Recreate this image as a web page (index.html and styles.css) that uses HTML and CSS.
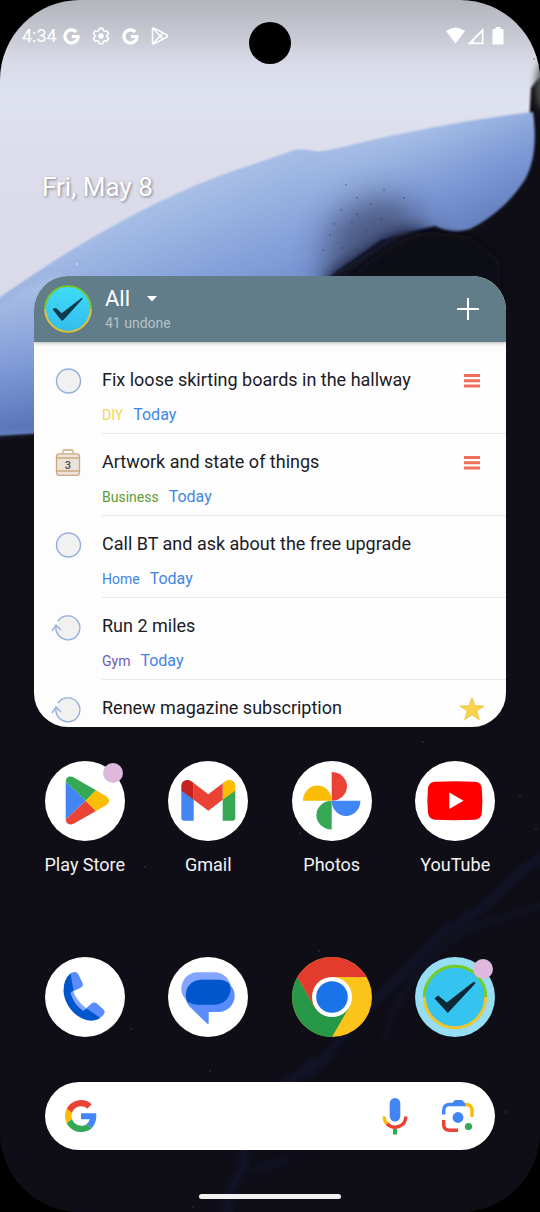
FILE: index.html
```html
<!DOCTYPE html>
<html lang="en">
<head>
<meta charset="utf-8">
<meta name="viewport" content="width=device-width, initial-scale=1">
<title>Home screen</title>
<link rel="stylesheet" href="styles.css">
</head>
<body>
<svg class="symbols" aria-hidden="true">
  <defs>
    <linearGradient id="tick-fill" x1="0" y1="0" x2="0" y2="1"><stop offset="0" stop-color="#3fdcf8"/><stop offset="1" stop-color="#33bdec"/></linearGradient>
    <symbol id="g-mono" viewBox="0 0 48 48"><path fill="none" stroke="#fff" stroke-width="9" d="M37.500 11A18.500 18.500 0 1 0 42.500 24H25"/></symbol>
    <symbol id="repeat" viewBox="0 0 36 36"><path class="ring" d="M8 12A12 12 0 1 1 6 17"/><path class="ring-line" d="M2 22L6 16L11 21"/></symbol>
    <symbol id="circle" viewBox="0 0 36 36"><circle class="ring" cx="18.500" cy="18" r="12"/></symbol>
    <symbol id="bars" viewBox="0 0 24 24"><path fill="#ef6f5c" d="M4 5h16v3H4zM4 10.300h16v3H4zM4 15.600h16v3H4z"/></symbol>
  </defs>
</svg>
<div class="phone">
  <svg class="wallpaper" viewBox="0 0 540 1212" preserveAspectRatio="xMidYMin slice" aria-hidden="true">
    <defs>
      <linearGradient id="sky" x1="0" y1="0" x2="0" y2="300" gradientUnits="userSpaceOnUse"><stop offset="0" stop-color="#b3b5bd"/><stop offset=".12" stop-color="#c7c9d3"/><stop offset=".2" stop-color="#d7dae6"/><stop offset=".32" stop-color="#dfe2ef"/><stop offset=".6" stop-color="#dcdcea"/><stop offset="1" stop-color="#dadbe9"/></linearGradient>
      <linearGradient id="blue" x1="190" y1="175" x2="265" y2="365" gradientUnits="userSpaceOnUse"><stop offset="0" stop-color="#adc3e8"/><stop offset=".45" stop-color="#88a3db"/><stop offset="1" stop-color="#5f7cc2"/></linearGradient>
      <linearGradient id="lobe" x1="430" y1="120" x2="480" y2="235" gradientUnits="userSpaceOnUse"><stop offset="0" stop-color="#a9c0e7"/><stop offset=".55" stop-color="#7c98d5"/><stop offset="1" stop-color="#607bbb"/></linearGradient>
      <linearGradient id="left" x1="0" y1="290" x2="30" y2="435" gradientUnits="userSpaceOnUse"><stop offset="0" stop-color="#aabfe6"/><stop offset=".5" stop-color="#829cd8"/><stop offset="1" stop-color="#566fb4"/></linearGradient>
      <linearGradient id="fade" x1="300" y1="0" x2="425" y2="0" gradientUnits="userSpaceOnUse"><stop offset="0" stop-color="#fff"/><stop offset="1" stop-color="#000"/></linearGradient>
      <mask id="left-mask" maskUnits="userSpaceOnUse" x="0" y="0" width="540" height="500"><rect width="540" height="500" fill="url(#fade)"/></mask>
      <filter id="soft1" filterUnits="userSpaceOnUse" x="-60" y="-60" width="660" height="1340"><feGaussianBlur stdDeviation="1"/></filter>
      <filter id="soft3" filterUnits="userSpaceOnUse" x="-60" y="-60" width="660" height="1340"><feGaussianBlur stdDeviation="3"/></filter>
      <filter id="soft8" filterUnits="userSpaceOnUse" x="-60" y="-60" width="660" height="1340"><feGaussianBlur stdDeviation="8"/></filter>
      <filter id="soft16" filterUnits="userSpaceOnUse" x="-60" y="-60" width="660" height="1340"><feGaussianBlur stdDeviation="16"/></filter>
    </defs>
    <rect width="540" height="1212" fill="#0f0e17"/>
    <path fill="url(#sky)" filter="url(#soft1)" d="M-20 -20H560V64Q540 74 531 88L529 125L300 180L-20 330Z"/>
    <path fill="url(#lobe)" filter="url(#soft1)" d="M-20 312Q50 262 100 234Q180 188 250 166Q285 154 296 150Q308 150 318 152Q330 151 345 147Q440 123 533 112C536 135 536 158 526 178C510 204 488 220 470 229Q452 235 435 226L380 240L310 290L50 432L-20 436Z"/>
    <g mask="url(#left-mask)"><path fill="url(#blue)" filter="url(#soft1)" d="M-20 312Q50 262 100 234Q180 188 250 166Q285 154 296 150Q308 150 318 152Q330 151 345 147Q400 133 430 127V226L380 240L310 290L50 432L-20 436Z"/></g>
    <path fill="url(#left)" filter="url(#soft3)" d="M-20 320L0 305Q24 285 60 275V431Q30 430 -20 436Z"/>
    <path fill="#2a3350" filter="url(#soft16)" opacity=".6" d="M322 320L330 225Q365 190 400 200Q415 210 425 235V320Z"/>
    <path fill="#11101a" filter="url(#soft8)" d="M322 330L330 276Q365 256 388 240Q408 228 428 234L450 250V330Z"/>
    <path fill="#0f0e17" filter="url(#soft3)" d="M345 320L352 276Q390 240 425 232Q445 232 470 236L500 260V320Z"/>
    <ellipse cx="543" cy="86" rx="8" ry="24" fill="#55564f" filter="url(#soft3)" opacity=".8"/>
    <g fill="#26324f" opacity=".4"><circle cx="346" cy="185" r="1"/><circle cx="357" cy="198" r="1"/><circle cx="341" cy="210" r="1"/><circle cx="371" cy="204" r="1"/><circle cx="384" cy="190" r="1"/><circle cx="404" cy="198" r="1"/><circle cx="352" cy="222" r="1"/><circle cx="334" cy="224" r="1"/><circle cx="366" cy="230" r="1"/><circle cx="381" cy="219" r="1"/><circle cx="323" cy="250" r="1"/><circle cx="343" cy="248" r="1"/><circle cx="330" cy="235" r="1"/><circle cx="357" cy="214" r="1"/><circle cx="534" cy="59" r="1"/></g>
    <g fill="none" stroke="#151b40" filter="url(#soft3)" opacity=".5"><path stroke-width="7" d="M550 850Q520 872 495 896T445 930Q420 960 395 982T340 1040T305 1075"/><path stroke-width="3" d="M545 905Q510 915 480 925T415 978Q390 1010 385 1040"/><path stroke-width="8" d="M315 1060Q300 1075 250 1110L242 1140L245 1165Q225 1190 228 1215"/><path stroke-width="4" d="M290 1158L250 1172"/></g>
    <g fill="#5b5f74" opacity=".35"><circle cx="423" cy="742" r="1"/><circle cx="520" cy="796" r="1"/><circle cx="536" cy="829" r="1"/><circle cx="131" cy="1029" r="1"/><circle cx="145" cy="867" r="1"/><circle cx="300" cy="833" r="1"/><circle cx="319" cy="951" r="1"/><circle cx="210" cy="1071" r="1"/><circle cx="506" cy="1112" r="1"/><circle cx="193" cy="1207" r="1"/></g>
    <circle cx="77" cy="264" r="1" fill="#cfdcf5"/>
  </svg>

  <header class="status">
    <div class="status-group">
      <time class="clock">4:34</time>
      <svg width="17" height="17"><use href="#g-mono"/></svg>
      <svg width="18" height="18" viewBox="0 0 18 18" fill="none" stroke="#fff" stroke-width="1.600" stroke-linejoin="round"><path d="M7.300 1.400h3.400l.6 2.200 1.400.8 2.200-.6 1.700 2.900-1.600 1.600v1.500l1.600 1.600-1.700 2.900-2.200-.6-1.400.8-.6 2.200H7.300l-.6-2.200-1.400-.8-2.200.6-1.700-2.900L3 9.800V8.300L1.400 6.700l1.700-2.900 2.200.6 1.400-.8z"/><circle cx="9" cy="9" r="2" fill="#fff"/></svg>
      <svg width="17" height="17"><use href="#g-mono"/></svg>
      <svg width="18" height="18" viewBox="0 0 18 18" fill="none" stroke="#fff" stroke-width="1.500" stroke-linejoin="round"><path d="M1.500 1.500Q1.500.5 3 1.200L16 8Q17.300 9 16 10L3 16.800Q1.500 17.400 1.500 16.500ZM2 1.500L12 12M2 16.500L12 6"/></svg>
    </div>
    <span class="camera"></span>
    <svg class="signals" width="58" height="18" viewBox="0 0 58 18" fill="#fff"><path d="M0 4Q9.500-3 19 4L9.500 16.500Z"/><path d="M21.500 17.200L37.500 1V17.200ZM28 15.500H35.800V5.500L28 13.200Z" fill-rule="evenodd"/><rect x="46.500" y="2" width="11" height="15.500" rx="1"/><rect x="49.500" y="0" width="5" height="3"/></svg>
  </header>

  <main class="home">
    <p class="date">Fri, May 8</p>

    <section class="widget" aria-label="Tasks">
      <div class="widget-head">
        <svg class="widget-logo" viewBox="8 8 64 64"><circle cx="40" cy="40" r="30.500" fill="url(#tick-fill)"/><path d="M9.500 40a30.500 30.500 0 0 1 61 0" fill="none" stroke="#76c927" stroke-width="2.600"/><path d="M9.500 40a30.500 30.500 0 0 0 61 0" fill="none" stroke="#e6c22e" stroke-width="2.600"/><path fill="#0d3a4c" d="M20 41Q20 38.500 24 38.500L31.500 45.500L58 25.200Q60 24.500 59 27L34 54.500L31.500 55.500Z"/></svg>
        <div class="list-name">
          <label class="picker"><select aria-label="List"><option>All</option></select><svg width="10" height="6" viewBox="0 0 10 6"><path fill="#fff" d="M0 0h10L5 5.500z"/></svg></label>
          <p class="count">41 undone</p>
        </div>
        <button class="add" type="button" aria-label="Add task"><svg width="22" height="22" viewBox="0 0 22 22"><path stroke="#fff" stroke-width="2" d="M11 0v22M0 11h22"/></svg></button>
      </div>
      <ul class="tasks">
        <li class="task">
          <span class="check"><input type="checkbox" id="t1"><svg><use href="#circle"/></svg></span>
          <div class="task-body"><div class="task-text"><label class="title" for="t1">Fix loose skirting boards in the hallway</label><p class="meta"><span class="tag diy">DIY</span><span class="due">Today</span></p></div><svg class="mark"><use href="#bars"/></svg></div>
        </li>
        <li class="task">
          <span class="check"><input type="checkbox" id="t2"><svg viewBox="0 0 36 36"><g fill="#ece2d8" stroke="#cba983" stroke-width="1.300"><path fill="none" d="M13 9V6Q13 5 14 5H22Q23 5 23 6V9"/><rect x="6.500" y="8.800" width="23" height="21.500" rx="2.500"/><path d="M6.500 13h23M6.500 26h23"/></g><text class="case-count" x="18" y="23.500">3</text></svg></span>
          <div class="task-body"><div class="task-text"><label class="title" for="t2">Artwork and state of things</label><p class="meta"><span class="tag business">Business</span><span class="due">Today</span></p></div><svg class="mark"><use href="#bars"/></svg></div>
        </li>
        <li class="task">
          <span class="check"><input type="checkbox" id="t3"><svg><use href="#circle"/></svg></span>
          <div class="task-body"><div class="task-text"><label class="title" for="t3">Call BT and ask about the free upgrade</label><p class="meta"><span class="tag house">Home</span><span class="due">Today</span></p></div></div>
        </li>
        <li class="task">
          <span class="check"><input type="checkbox" id="t4"><svg><use href="#repeat"/></svg></span>
          <div class="task-body"><div class="task-text"><label class="title" for="t4">Run 2 miles</label><p class="meta"><span class="tag gym">Gym</span><span class="due">Today</span></p></div></div>
        </li>
        <li class="task">
          <span class="check"><input type="checkbox" id="t5"><svg><use href="#repeat"/></svg></span>
          <div class="task-body"><div class="task-text"><label class="title" for="t5">Renew magazine subscription</label></div><svg class="mark" viewBox="0 0 24 24"><path fill="#f9d44c" stroke="#eac03c" stroke-width=".8" d="M12 .5L14.900 8.700L23.800 9L16.700 14.200L19.400 22.800L12 17.700L4.600 22.800L7.300 14.200L.2 9L9.100 8.700Z"/></svg></div>
        </li>
      </ul>
    </section>

    <nav class="apps" aria-label="Apps">
      <a class="app" href="#play"><span class="icon has-badge"><svg viewBox="0 0 80 80"><circle cx="40" cy="40" r="40" fill="#fff"/><path fill="#4285f4" d="M20.700 20.500L40.700 39.700L20.700 58.500Z"/><path fill="#34a853" d="M20.700 20.500Q21.500 14 27.500 15.800L51 29.300L40.700 39.700Z"/><path fill="#ea4335" d="M20.700 58.500L40.700 39.700L51 50L29 62.500Q22 65.500 20.700 58.500Z"/><path fill="#fbbc04" d="M51 29.300L61.500 35.500Q66.500 39.700 61.500 44L51 50L40.700 39.700Z"/></svg></span>Play Store</a>
      <a class="app" href="#gmail"><span class="icon"><svg viewBox="0 0 80 80"><circle cx="40" cy="40" r="40" fill="#fff"/><path fill="#4285f4" d="M13.300 29L25.700 38V59.700H16.300Q13.300 59.700 13.300 56.700Z"/><path fill="#34a853" d="M67.300 29L54.700 38V59.700H64.300Q67.300 59.700 67.300 56.700Z"/><path fill="#c5221f" d="M13.300 25.500C13.300 19 20 17.500 24 20.800L25.700 22V38.700L13.300 29.500Z"/><path fill="#fbbc04" d="M67.300 25.500C67.300 19 60.700 17.500 56.500 20.800L54.700 22.200V38.700L67.300 29.500Z"/><path fill="#ea4335" d="M25.700 22L40.300 33.300L54.700 22.200V38.700L40.300 49.800L25.700 38.700Z"/></svg></span>Gmail</a>
      <a class="app" href="#photos"><span class="icon"><svg viewBox="0 0 80 80"><circle cx="40" cy="40" r="40" fill="#fff"/><path fill="#ea4335" d="M39.700 39.700V11A15.300 14.350 0 0 1 39.700 39.700"/><path fill="#4285f4" d="M39.700 39.700H68.400A14.350 15.300 0 0 1 39.700 39.700"/><path fill="#34a853" d="M39.700 39.700V68.400A15.300 14.350 0 0 1 39.700 39.700"/><path fill="#fbbc04" d="M39.700 39.700H11A14.350 15.300 0 0 1 39.700 39.700"/></svg></span>Photos</a>
      <a class="app" href="#youtube"><span class="icon"><svg viewBox="0 0 80 80"><circle cx="40" cy="40" r="40" fill="#fff"/><path fill="#f00" d="M20 20.700Q40 19.900 60 20.700Q66 21.200 66.800 27Q67.900 39.700 66.800 52Q66 58.200 60 58.700Q40 59.600 20 58.700Q14 58.200 13 52Q11.700 39.700 13 27Q14 21.200 20 20.700"/><path fill="#fff" d="M34.300 31.500L48.500 39.700L34.300 48Z"/></svg></span>YouTube</a>
    </nav>

    <nav class="apps dock" aria-label="Dock">
      <a class="app" href="#phone" aria-label="Phone"><span class="icon"><svg viewBox="0 0 80 80"><circle cx="40" cy="40" r="40" fill="#fff"/><path fill="#82a6ff" d="M25 34L28 33.500Q31.500 44 41 51L38 57L26 45Z"/><path fill="#5a8cff" d="M24.500 17Q31 13 33.500 17.500L37.800 26.500Q38.500 29 36 30.500L25.500 35.800L22 25ZM38 54L46.500 46.500Q49.500 44.500 52.500 47L58.500 52.500Q61.500 56 57 59.500L50 63L42 61Z"/><path fill="#0057cc" d="M25.500 16.500L28.500 33.500L25.500 35.800C28 44 32 50 38.500 54L41.500 51.500L55.500 61Q51 63.800 46 63.700C30 62.500 19 47 18.500 34Q18.500 22 25.500 16.500"/></svg></span></a>
      <a class="app" href="#messages" aria-label="Messages"><span class="icon"><svg viewBox="0 0 80 80"><circle cx="40" cy="40" r="40" fill="#fff"/><rect x="13.300" y="15.300" width="49.500" height="32.400" rx="16.200" fill="#82a6ff"/><path fill="#5a8cff" d="M33.500 22.700H50.500A16.150 16.150 0 0 1 50.500 55H40.700V66Q40.300 67.500 39 66.500L21.500 49.500Q17.700 45 17.700 38.500Q18.500 23.500 33.500 22.700"/><path fill="#0057cc" d="M33 22.700H50.500Q57 22.700 61.200 26.500Q63 31 62.500 33.500C61 43 54 47.700 46.500 47.700H29.500Q23.500 47.500 19 44.500Q17 39 18.200 34.500Q21 23.500 33 22.700"/></svg></span></a>
      <a class="app" href="#chrome" aria-label="Chrome"><span class="icon"><svg viewBox="0 0 80 80"><circle cx="40" cy="40" r="40" fill="#fcc31a"/><path fill="#279847" d="M5.400 20L22.700 50L40 40L57.300 50L40 80A40 40 0 0 1 5.400 20"/><path fill="#e33b2e" d="M5.400 20A40 40 0 0 1 74.600 20H40V40L22.700 50Z"/><circle cx="40" cy="40" r="20" fill="#fff"/><circle cx="40" cy="40" r="15.800" fill="#1a73e8"/></svg></span></a>
      <a class="app" href="#tasks" aria-label="Tasks"><span class="icon has-badge"><svg viewBox="0 0 80 80"><circle cx="40" cy="40" r="40" fill="#96def4"/><circle cx="40" cy="40" r="31" fill="#35c3f0"/><path d="M9.300 40a30.700 30.700 0 0 1 61.400 0" fill="none" stroke="#76cc27" stroke-width="3"/><path d="M9.300 40a30.700 30.700 0 0 0 61.400 0" fill="none" stroke="#f0c52f" stroke-width="3"/><path fill="#0c2836" d="M19.500 41.500L23 38.500L31.800 45.500L58.700 24.700L60.700 26L32.800 56Z"/></svg></span></a>
    </nav>

    <form class="search" role="search">
      <svg width="32" height="32" viewBox="0 0 48 48"><path fill="#ea4335" d="M24 9.500c3.540 0 6.710 1.220 9.210 3.600l6.850-6.850C35.900 2.380 30.470 0 24 0 14.620 0 6.510 5.380 2.560 13.220l7.980 6.190C12.430 13.720 17.740 9.500 24 9.500z"/><path fill="#4285f4" d="M46.980 24.550c0-1.570-.15-3.090-.38-4.550H24v9.020h12.940c-.58 2.960-2.260 5.480-4.780 7.180l7.730 6c4.510-4.180 7.090-10.360 7.090-17.650z"/><path fill="#fbbc05" d="M10.530 28.590A14.500 14.500 0 0 1 9.770 24c0-1.600.27-3.140.76-4.590l-7.980-6.190A23.900 23.900 0 0 0 0 24c0 3.870.92 7.530 2.560 10.780z"/><path fill="#34a853" d="M24 48c6.480 0 11.930-2.130 15.890-5.810l-7.730-6c-2.150 1.450-4.920 2.300-8.160 2.300-6.260 0-11.570-4.220-13.470-9.910l-7.980 6.190C6.510 42.620 14.620 48 24 48z"/></svg>
      <input type="text" aria-label="Search">
      <button type="button" aria-label="Voice search"><svg width="26" height="38" viewBox="0 0 26 38"><rect x="7.700" y="1" width="10.600" height="23.500" rx="5.300" fill="#4285f4"/><g fill="none" stroke-width="3.400"><path stroke="#fbbc04" d="M2.200 19.500Q2.200 24.500 5.800 27.500"/><path stroke="#ea4335" d="M5 26.700C12 33.500 23.800 29.500 23.800 19.500"/><path stroke="#34a853" stroke-width="4" d="M13 32V37.500"/></g></svg></button>
      <button type="button" aria-label="Lens"><svg width="34" height="38" viewBox="0 0 34 38"><g fill="none" stroke-width="3.400"><path stroke="#fbbc04" d="M23 7.500H25Q31 7.500 31 13.500V20"/><path stroke="#4285f4" d="M2.700 17.500V13.500Q2.700 7.500 8.700 7.500H24"/><path stroke="#ea4335" d="M2.700 23V27.500Q2.700 33.200 8.700 33.200H17"/></g><path fill="#4285f4" d="M10.500 7.500L13 4Q13.500 3 15 3H20Q21.500 3 22 4L25 8.500H10.500Z"/><circle cx="17" cy="20.500" r="5.400" fill="#4285f4"/><circle cx="27.500" cy="29.500" r="3.600" fill="#34a853"/></svg></button>
    </form>
  </main>
  <span class="handle"></span>
</div>
</body>
</html>
```
FILE: styles.css
```css
* { box-sizing: border-box; }
body { margin: 0; background: #000; font-family: Roboto, "Liberation Sans", sans-serif; }
p, ul { margin: 0; padding: 0; }
button { border: 0; padding: 0; background: none; cursor: pointer; }
svg { display: block; flex: none; }
.symbols { position: absolute; width: 0; height: 0; }

.phone {
  position: relative;
  display: flex;
  flex-direction: column;
  min-height: 100vh;
  overflow: hidden;
  border-radius: 80px;
  background: #0f0e17;
  color: #fff;
}
.wallpaper { position: absolute; inset: 0; width: 100%; height: 100%; }
.status, .home, .handle { position: relative; }

.status {
  display: flex;
  justify-content: space-between;
  align-items: center;
  height: 72px;
  padding: 0 36px 0 22px;
}
.status-group { display: flex; align-items: center; gap: 12px; }
.clock { margin-right: -6px; font-size: 18px; line-height: 24px; }
.camera {
  position: absolute;
  top: 22px;
  left: 50%;
  width: 42px;
  height: 42px;
  margin-left: -21px;
  border-radius: 50%;
  background: #000;
}

.home { display: flex; flex-direction: column; }
.date {
  margin: 99px 42px 73px;
  font-size: 26px;
  line-height: 32px;
  text-shadow: 1px 1px 3px rgba(0, 0, 0, .45);
}

.widget {
  margin: 0 34px;
  overflow: hidden;
  border-radius: 34px;
  background: #fdfdfd;
}
.widget-head {
  position: relative;
  display: flex;
  align-items: center;
  height: 66px;
  padding: 0 27px 0 10px;
  background: #617d8a;
  box-shadow: 0 1px 4px rgba(0, 0, 0, .3);
}
.widget-logo { width: 48px; height: 48px; }
.list-name { flex: 1; margin-left: 13px; }
.picker { display: flex; align-items: center; }
.picker select {
  width: 42px;
  border: 0;
  padding: 0;
  appearance: none;
  background: none;
  color: #fff;
  font: 22px/28px Roboto, "Liberation Sans", sans-serif;
}
.count { color: #b5c1c8; font-size: 14px; line-height: 20px; }

.tasks { max-height: 385px; padding-top: 10px; overflow: hidden; list-style: none; }
.task { display: flex; gap: 16px; min-height: 82px; padding-left: 16px; }
.check { display: grid; width: 36px; height: 36px; margin-top: 11px; }
.check > * { grid-area: 1 / 1; width: 36px; height: 36px; margin: 0; }
.check input { appearance: none; }
.check svg { pointer-events: none; }
.ring { fill: #f1f1f1; stroke: #93aedb; stroke-width: 1.4; }
.ring-line { fill: none; stroke: #93aedb; stroke-width: 1.4; }
.case-count { fill: #4d5058; font-size: 11px; font-weight: 500; text-anchor: middle; }
.task-body {
  display: flex;
  flex: 1;
  justify-content: space-between;
  padding: 16px 22px 0 0;
  border-bottom: 1px solid #e9e9eb;
}
.title { color: #1b1b26; font-size: 18px; line-height: 24px; }
.meta { display: flex; align-items: center; gap: 10px; margin-top: 12px; line-height: 20px; }
.tag { font-size: 14px; }
.due { padding-top: 1px; color: #4285e4; font-size: 16px; }
.diy { color: #f6d453; }
.business { color: #5f9c31; }
.house { color: #4285e4; }
.gym { color: #6a5bb8; }
.mark { width: 24px; height: 24px; margin-top: 1px; }

.apps {
  display: grid;
  grid-template-columns: repeat(4, 1fr);
  margin: 34px 23px 0;
}
.app {
  display: flex;
  flex-direction: column;
  align-items: center;
  gap: 12px;
  color: #f3f3f3;
  font-size: 18px;
  line-height: 24px;
  text-decoration: none;
}
.icon { position: relative; width: 80px; height: 80px; }
.has-badge::after {
  content: "";
  position: absolute;
  top: 2px;
  right: 2px;
  width: 20px;
  height: 20px;
  border-radius: 50%;
  background: #dfb8de;
}
.dock { margin-top: 80px; }

.search {
  display: flex;
  align-items: center;
  height: 68px;
  margin: 45px 45px 0;
  padding: 0 20px;
  border-radius: 34px;
  background: #fff;
}
.search input {
  flex: 1;
  min-width: 0;
  border: 0;
  outline: 0;
  background: none;
  font: 18px/24px Roboto, "Liberation Sans", sans-serif;
}
.search button + button { margin-left: 33px; }

.handle {
  width: 142px;
  height: 5px;
  margin: auto auto 13px;
  border-radius: 3px;
  background: #f0f0f0;
}
```
